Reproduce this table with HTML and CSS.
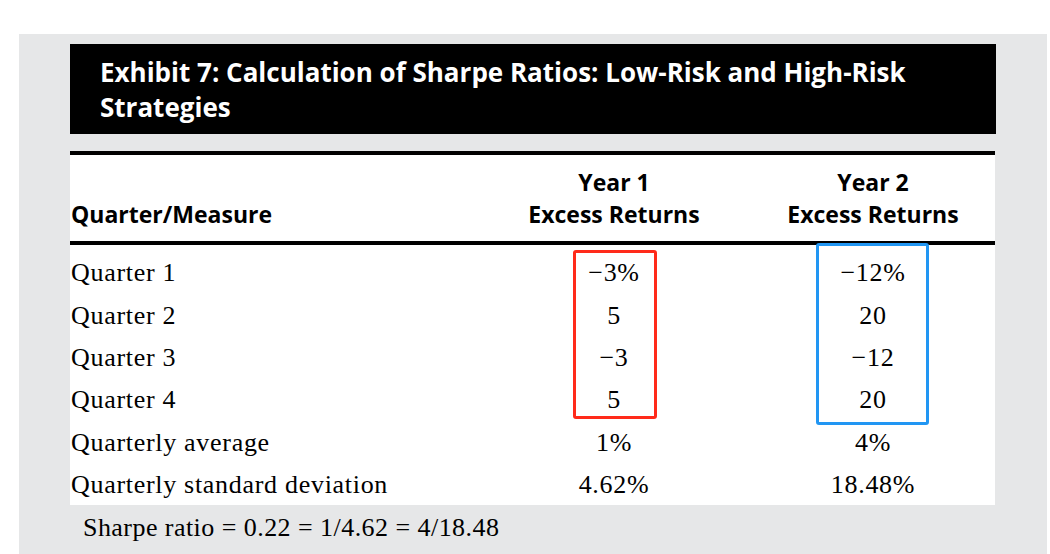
FILE: index.html
```html
<!DOCTYPE html>
<html lang="en">
<head>
<meta charset="utf-8">
<title>Exhibit 7: Calculation of Sharpe Ratios</title>
<link rel="stylesheet" href="styles.css">
</head>
<body>
<div class="page">
  <section class="panel">
    <h1 class="title">Exhibit 7: Calculation of Sharpe Ratios: Low-Risk and High-Risk Strategies</h1>
    <div class="table">
      <div class="thead">
        <div class="th th-left">Quarter/Measure</div>
        <div class="th">Year 1<br>Excess Returns</div>
        <div class="th">Year 2<br>Excess Returns</div>
      </div>
      <div class="tbody">
        <div class="row"><div class="label">Quarter 1</div><div class="val">&minus;3%</div><div class="val">&minus;12%</div></div>
        <div class="row"><div class="label">Quarter 2</div><div class="val">5</div><div class="val">20</div></div>
        <div class="row"><div class="label">Quarter 3</div><div class="val">&minus;3</div><div class="val">&minus;12</div></div>
        <div class="row"><div class="label">Quarter 4</div><div class="val">5</div><div class="val">20</div></div>
        <div class="row"><div class="label">Quarterly average</div><div class="val">1%</div><div class="val">4%</div></div>
        <div class="row"><div class="label">Quarterly standard deviation</div><div class="val">4.62%</div><div class="val">18.48%</div></div>
        <div class="mark mark-red"></div>
        <div class="mark mark-blue"></div>
      </div>
    </div>
    <p class="note">Sharpe ratio = 0.22 = 1/4.62 = 4/18.48</p>
  </section>
</div>
</body>
</html>
```
FILE: styles.css
```css
html, body {
  margin: 0;
  padding: 0;
  background: #ffffff;
}
.page {
  padding-top: 34px;
  height: 520px;
}
.panel {
  margin-left: 19px;
  width: 1028px;
  height: 520px;
  box-sizing: border-box;
  background: #e6e7e8;
  padding: 10px 51px 0 51px;
}
.title {
  margin: 0;
  height: 90px;
  box-sizing: border-box;
  background: #000000;
  color: #ffffff;
  font-family: "Open Sans", "Noto Sans", sans-serif;
  font-weight: 700;
  font-size: 26px;
  line-height: 35px;
  padding: 11px 60px 0 30px;
  letter-spacing: 0;
}
.table {
  margin-top: 17px;
  width: 925px;
  background: #ffffff;
  border-top: 4px solid #000000;
}
.thead {
  display: grid;
  grid-template-columns: 407px 274px 244px;
  height: 90px;
  box-sizing: border-box;
  border-bottom: 4px solid #000000;
  align-items: end;
  padding-bottom: 11px;
  font-family: "Open Sans", "Noto Sans", sans-serif;
  font-weight: 700;
  font-size: 23px;
  line-height: 32px;
  color: #000000;
}
.th { text-align: center; }
.th-left { text-align: left; padding-left: 1px; }
.tbody {
  position: relative;
  padding-top: 7px;
  height: 260px;
  box-sizing: border-box;
  font-family: "Liberation Serif", "Times New Roman", serif;
  font-size: 26px;
  letter-spacing: 0.7px;
  color: #000000;
}
.row {
  display: grid;
  grid-template-columns: 407px 274px 244px;
  height: 42.4px;
  align-items: center;
}
.label { padding-left: 1px; }
.val { text-align: center; }
.mark {
  position: absolute;
  box-sizing: border-box;
  border-radius: 3px;
  border: 3px solid;
}
.mark-red {
  border-color: #ff2a1a;
  left: 503px;
  top: 5px;
  width: 84px;
  height: 169px;
}
.mark-blue {
  border-color: #2196f3;
  left: 746px;
  top: -2px;
  width: 113px;
  height: 182px;
}
.note {
  margin: 0;
  padding: 8px 0 0 13px;
  font-family: "Liberation Serif", "Times New Roman", serif;
  font-size: 26px;
  letter-spacing: 0.45px;
  line-height: 30px;
  color: #000000;
}
```
